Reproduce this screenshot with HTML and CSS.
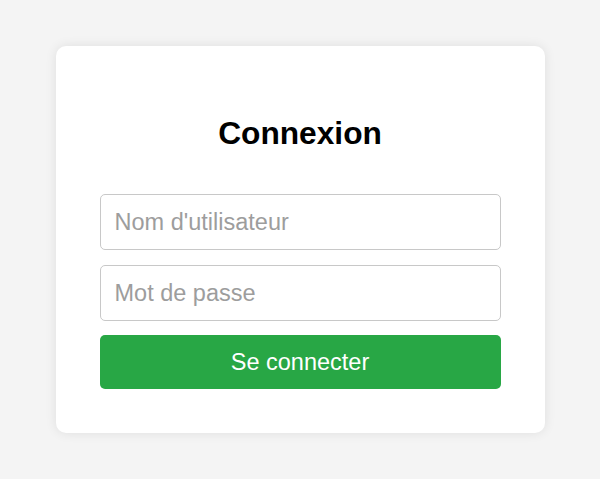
FILE: index.html
```html
<!DOCTYPE html>
<html lang="fr">
<head>
<meta charset="utf-8">
<title>Connexion</title>
<link rel="stylesheet" href="styles.css">
</head>
<body>
<main class="page">
  <form class="card">
    <h2 class="title">Connexion</h2>
    <input class="field" type="text" placeholder="Nom d'utilisateur">
    <input class="field" type="password" placeholder="Mot de passe">
    <button class="submit" type="button">Se connecter</button>
  </form>
</main>
</body>
</html>
```
FILE: styles.css
```css
* { box-sizing: border-box; }
html, body { margin: 0; padding: 0; }
body {
  background: #f4f4f4;
  font-family: "Liberation Sans", Arial, Helvetica, sans-serif;
}
.page {
  min-height: 100vh;
  display: flex;
  align-items: center;
  justify-content: center;
}
.card {
  width: 489px;
  background: #fff;
  border-radius: 10px;
  box-shadow: 0 0 12px rgba(0, 0, 0, 0.09);
  padding: 44px;
  display: flex;
  flex-direction: column;
}
.title {
  margin: 25px 0 42px;
  text-align: center;
  font-size: 31.7px;
  line-height: 37px;
  font-weight: bold;
  color: #000;
}
.field {
  height: 56px;
  border: 1px solid #c8c8c8;
  border-radius: 5px;
  padding: 0 14px;
  font-family: inherit;
  font-size: 23.5px;
  color: #333;
  background: #fff;
  margin-bottom: 15px;
  outline: none;
}
.field::placeholder { color: #9d9d9d; }
.field + .field { margin-bottom: 14px; }
.submit {
  height: 54px;
  border: none;
  border-radius: 5px;
  background: #28a745;
  color: #fff;
  font-family: inherit;
  font-size: 23.5px;
  cursor: pointer;
}
```
